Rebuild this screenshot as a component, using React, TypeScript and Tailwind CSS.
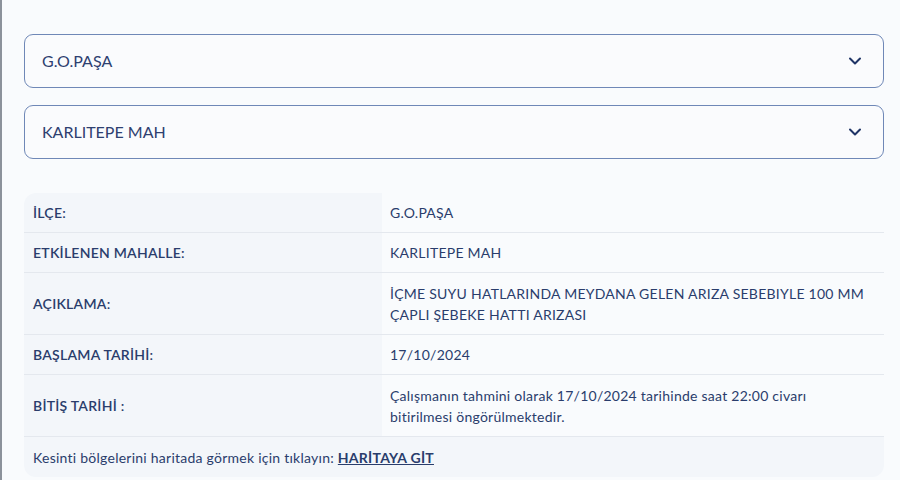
import { ChevronDown } from 'lucide-react';

const rows: { label: string; value: string[]; tall?: boolean }[] = [
	{ label: 'İLÇE:', value: ['G.O.PAŞA'] },
	{ label: 'ETKİLENEN MAHALLE:', value: ['KARLITEPE MAH'] },
	{
		label: 'AÇIKLAMA:',
		value: ['İÇME SUYU HATLARINDA MEYDANA GELEN ARIZA SEBEBIYLE 100 MM', 'ÇAPLI ŞEBEKE HATTI ARIZASI'],
		tall: true,
	},
	{ label: 'BAŞLAMA TARİHİ:', value: ['17/10/2024'] },
	{
		label: 'BİTİŞ TARİHİ :',
		value: ['Çalışmanın tahmini olarak 17/10/2024 tarihinde saat 22:00 civarı', 'bitirilmesi öngörülmektedir.'],
		tall: true,
	},
];

function Select({ value }: { value: string }) {
	return (
		<div className="flex items-center justify-between h-[54px] rounded-[9px] border border-[#6f88b7] bg-[#fafbfd] pl-[17px] pr-[18px]">
			<span className="text-[16px] text-[#2e4070]">{value}</span>
			<ChevronDown className="w-5 h-5 text-[#1f3466]" strokeWidth={2.4} />
		</div>
	);
}

export default function App() {
	return (
		<div
			className="min-h-[480px] h-[480px] overflow-hidden bg-[#f9fbfd] border-l-2 border-[#8c929b] text-[#2a3d6c]"
			style={{ fontFamily: 'Lato, "Noto Sans", sans-serif' }}
		>
			<div className="pl-[22px] pr-[16px] pt-[34px] flex flex-col">
				<div className="flex flex-col gap-[17px]">
					<Select value="G.O.PAŞA" />
					<Select value="KARLITEPE MAH" />
				</div>
				<div className="mt-[34px] rounded-xl overflow-hidden text-[14px] tracking-[0.25px]">
					{rows.map((r) => (
						<div
							key={r.label}
							className={`grid grid-cols-[358px_1fr] border-b border-[#e4e8ee] ${r.tall ? 'h-[62px]' : 'h-[40px]'}`}
						>
							<div className="bg-[#f3f6fa] flex items-center pl-[9px] font-semibold">{r.label}</div>
							<div className="flex flex-col justify-center pl-[8px] leading-[21px]">
								{r.value.map((v) => (
									<span key={v}>{v}</span>
								))}
							</div>
						</div>
					))}
					<div className="bg-[#f3f6fa] h-[40px] flex items-center pl-[9px]">
						<span>
							Kesinti bölgelerini haritada görmek için tıklayın:{' '}
							<a href="#" className="font-bold underline">
								HARİTAYA GİT
							</a>
						</span>
					</div>
				</div>
			</div>
		</div>
	);
}
